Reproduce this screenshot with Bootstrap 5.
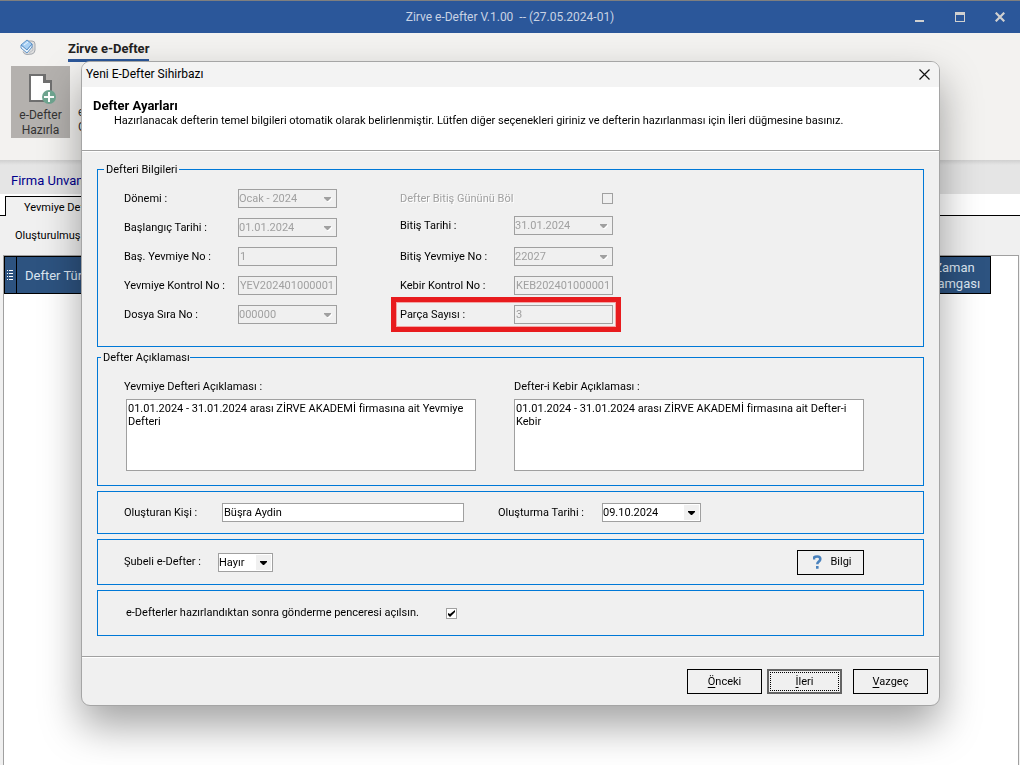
<!DOCTYPE html>
<html lang="tr">
<head>
<meta charset="utf-8">
<meta name="viewport" content="width=device-width, initial-scale=1">
<title>Zirve e-Defter</title>
<link href="https://cdn.jsdelivr.net/npm/bootstrap@5.3.0/dist/css/bootstrap.min.css" rel="stylesheet">
<style>
  body { font-family: Roboto, "Noto Sans", sans-serif; font-size: 11px; line-height: 14px; color: #000; background: #f0f0f0; overflow: hidden; }

  /* main window */
  .titlebar { height: 33px; background: #2b579a; border-top: 1px solid #7f7f7f; color: #c9d3e4; font-size: 12px; display: grid; grid-template-columns: 1fr auto 1fr; align-items: center; }
  .titlebar .win-btn { width: 40px; height: 32px; border: 0; padding: 0; background: none; color: #d0d0d0; display: grid; place-items: center; }
  .ribbon { height: 127px; background: #f3f2f0; }
  .ribbon-tabs { height: 29px; padding-left: 20px; }
  .ribbon-tab { height: 29px; line-height: 32px; font-size: 13px; font-weight: 700; color: #222; text-decoration: none; border-bottom: 3px solid #2b579a; margin-left: 32px; }
  .ribbon-tools { padding: 4px 11px 0; }
  .ribbon-btn { width: 59px; height: 72px; padding: 5px 0 0; border: 0; background: none; font-size: 12px; line-height: 15px; color: #333; }
  .ribbon-btn.current { background: #b4b1ae; }
  .ribbon-btn.cut { width: 14px; padding: 36px 0 0 8px; text-align: left; }
  .firm { height: 34px; padding: 0 11px; font-size: 13px; line-height: 42px; color: #00008b; background: linear-gradient(#d0d0d0, #e5e5e5 5px); }
  .doc-tabs { height: 22px; background: #fff; padding-top: 2px; display: flex; }
  .doc-tabs::before { content: ""; width: 5px; border-bottom: 1px solid #000; }
  .doc-tabs::after { content: ""; flex: 1; border-bottom: 1px solid #000; }
  .doc-tab { background: #f0f0f0; border: solid #000; border-width: 1px 1px 0; padding: 0 18px; color: #000; text-decoration: none; line-height: 21px; white-space: nowrap; }
  .list-head { height: 39px; padding-left: 15px; line-height: 39px; }
  .grid-area { margin: 0 1px 0 3px; background: #fff; border: 1px solid #a0a0a0; border-bottom: 0; }
  .grid-head { width: 987px; border-collapse: collapse; table-layout: fixed; color: #dce6f2; font-size: 13px; line-height: 16px; }
  .grid-head th { background: #2d5380; border: 1px solid #000; font-weight: 400; height: 37px; padding: 2px 8px 0; }
  .grid-head th.handle { width: 12px; padding: 0 2px; }
  .grid-head th.stamp { width: 72px; text-align: center; padding: 1px 0 0; }

  /* wizard */
  .wizard { margin: 61px 80px 0 81px; max-width: none; }
  .wizard .modal-content { border: 1px solid #a5a5a5; border-radius: 9px; background: #f0f0f0; box-shadow: 0 20px 40px rgba(0, 0, 0, .36); color: #000; overflow: hidden; }
  .wizard-title { height: 25px; background: #f3f3f3; padding: 0 8px 0 4px; }
  .wizard-title h1 { font-size: 12px; font-weight: 400; line-height: 27px; }
  .wizard-title button { width: 14px; height: 14px; padding: 0; border: 0; background: none; display: grid; place-items: center; }
  .wizard-intro { height: 63px; background: #fff; padding: 10px 11px; }
  .wizard-intro h2 { font-size: 13px; font-weight: 700; line-height: 17px; margin: 0; }
  .wizard-intro p { margin: 0 0 0 21px; }
  .rule { height: 2px; background: #fff; border-top: 1px solid #a0a0a0; }
  .wizard-body { padding: 10px 15px 20px; }
  .group { border: 1px solid #0078d7; padding: 0 59px 0 26px; }
  .group legend { float: none; width: auto; font-size: 11px; line-height: 14px; margin: 0; padding: 1px 2px 0; }
  .group.info { padding-bottom: 22px; }
  .group.info legend { margin-left: -20px; }
  .group.notes { margin-top: 3px; padding-bottom: 14px; }
  .group.notes legend { margin-left: -23px; padding-right: 0; }
  .note-row { padding-top: 15px; }
  .note-row label { margin-bottom: 5px; }
  .fld-col { display: flex; flex-direction: column; gap: 10px; width: 213px; }
  .fld-col.second { margin-left: 63px; }
  .fld { display: flex; align-items: center; height: 19px; position: relative; }
  .fld > label { width: 114px; white-space: nowrap; }
  .fld.raised { margin-top: -2px; margin-bottom: 2px; }
  .off { color: #a0a0a0; text-shadow: 1px 1px #fff; }
  .outlined::after { content: ""; position: absolute; inset: -8px -8px -8px -9px; border: 5px solid #e81b1e; outline: 1px solid #f3a5a5; outline-offset: -6px; pointer-events: none; }
  .ctl { display: block; width: 99px; height: 19px; padding: 0 1px; border: 1px solid #a0a0a0; border-radius: 0; background-color: #fff; color: #000; font: inherit; line-height: 15px; appearance: none; }
  select.ctl { padding: 0; background-repeat: no-repeat; background-position: right 1px center; background-image: url("data:image/svg+xml,%3Csvg xmlns='http://www.w3.org/2000/svg' width='15' height='15'%3E%3Cpath fill='%23f0f0f0' d='M0 0h15v15H0z'/%3E%3Cpath d='M4 6h7v1l-3 3h-1l-3-3z'/%3E%3C/svg%3E"); }
  .ctl:disabled { background-color: #f0f0f0; color: #a0a0a0; opacity: 1; }
  select.ctl:disabled { background-image: url("data:image/svg+xml,%3Csvg xmlns='http://www.w3.org/2000/svg' width='15' height='15'%3E%3Cpath fill='%23fff' d='M5 7h7v1l-3 3h-1l-3-3z'/%3E%3Cpath fill='%23a0a0a0' d='M4 6h7v1l-3 3h-1l-3-3z'/%3E%3C/svg%3E"); }
  textarea.ctl { width: 350px; height: 72px; padding: 2px 1px; line-height: 13px; resize: none; }
  #not1 { margin-left: 2px; }
  .tick { width: 11px; height: 11px; margin: 0; appearance: none; border: 1px solid #a0a0a0; background: #fff center no-repeat; }
  .tick:disabled { background: #f0f0f0; }
  .tick:checked { background-image: url("data:image/svg+xml,%3Csvg xmlns='http://www.w3.org/2000/svg' width='9' height='9'%3E%3Cpath d='M1 4v2l2 2 5-5V1L3 5z'/%3E%3C/svg%3E"); }
  .person { height: 43px; margin-top: 5px; }
  .person label:first-child { width: 98px; }
  #kisi { width: 242px; margin-right: 34px; }
  #kisi + label { width: 104px; }
  .branch { height: 46px; margin-top: 5px; }
  .branch label { width: 94px; }
  #sube { width: 55px; }
  .after { height: 46px; margin-top: 5px; padding-left: 28px; }
  .after label { width: 320px; }
  .push { height: 25px; width: 75px; padding: 0; border: 1px solid #000; border-radius: 0; background: #f0f0f0; color: #000; font-size: 11px; line-height: 14px; text-align: center; }
  .push.info-btn { width: 67px; padding-left: 4px; }
  .push.default { border: 2px solid #646464; padding: 1px; }
  .push.default span { display: block; border: 1px dotted #000; line-height: 17px; }
  .push u { text-underline-offset: 2px; }
  .wizard-foot { height: 47px; padding: 11px 11px 0; gap: 5px; }
  .wizard-foot .cancel { margin-left: 6px; }
</style>
</head>
<body>
<div class="vh-100 d-flex flex-column">
  <header class="titlebar">
    <span></span>
    <span>Zirve e-Defter V.1.00 &nbsp;-- (27.05.2024-01)</span>
    <div class="d-flex justify-content-end">
      <button class="win-btn" aria-label="Simge durumuna küçült"><svg width="11" height="11" fill="currentColor"><path d="M0 8h9v2H0z"/></svg></button>
      <button class="win-btn" aria-label="Ekranı kapla"><svg width="10" height="10" fill="currentColor"><path fill-rule="evenodd" d="M0 0h10v10H0zM1 3h8v6H1z"/></svg></button>
      <button class="win-btn" aria-label="Kapat"><svg width="10" height="10" stroke="currentColor" stroke-width="2.2"><path d="M.7.7l8.600 8.600M9.300.7L.7 9.300"/></svg></button>
    </div>
  </header>

  <div class="ribbon">
    <nav class="ribbon-tabs d-flex">
      <svg width="16" height="18" viewBox="0 0 16 18" class="mt-1" fill="none">
        <path d="M6 4h6q3 0 3 3v6q0 3-3 4l-5 .5q-3 0-4-3" fill="#dedede" stroke="#a2a7ad"/>
        <path d="M12 7l1 6-4 3" stroke="#b9bdc2"/>
        <path d="M1 8l6-5 5 4-5 6z" fill="#a8d0f3" stroke="#5c92c8"/>
        <path d="M1 8l6 5 5-6v3l-5 6-6-5z" fill="#eef6fd" stroke="#5c92c8"/>
        <path d="M4 8l4-3" stroke="#e8f4ff"/>
      </svg>
      <a class="ribbon-tab" href="#">Zirve e-Defter</a>
    </nav>
    <div class="ribbon-tools d-flex">
      <button class="ribbon-btn current">
        <svg width="30" height="32" viewBox="0 0 30 32" class="d-block mx-auto mb-1" fill="none">
          <path d="M4 3h15v6h6v20H4z" fill="#fff" stroke="#6f6f6f" stroke-width="2"/>
          <path d="M18 3v7h7" stroke="#6f6f6f" stroke-width="2"/>
          <circle cx="23" cy="25" r="7" fill="#6fa590"/>
          <path d="M23 20v10M18 25h10" stroke="#fff" stroke-width="2"/>
        </svg>
        e-Defter<br>Hazırla
      </button>
      <button class="ribbon-btn cut">e<br>G</button>
    </div>
  </div>

  <div class="firm">Firma Unvanı</div>
  <nav class="doc-tabs"><a class="doc-tab" href="#">Yevmiye Defteri</a></nav>
  <div class="list-head">Oluşturulmuş Defterler</div>
  <div class="grid-area flex-grow-1">
    <table class="grid-head">
      <thead><tr>
        <th class="handle"><svg width="7" height="10" class="d-block" stroke="#fff"><path d="M0 .5h1M2 .5h4M0 3.500h1M2 3.500h4M0 6.500h1M2 6.500h4M0 9.500h1M2 9.500h4"/></svg></th>
        <th>Defter Türü</th>
        <th class="stamp">Zaman<br>Damgası</th>
      </tr></thead>
    </table>
  </div>
</div>

<div class="modal d-block overflow-hidden" tabindex="-1" role="dialog" aria-labelledby="wizTitle">
  <div class="modal-dialog wizard">
    <form class="modal-content">
      <div class="wizard-title d-flex align-items-center justify-content-between">
        <h1 id="wizTitle" class="m-0">Yeni E-Defter Sihirbazı</h1>
        <button type="button" aria-label="Kapat"><svg width="11" height="11" stroke="#111" stroke-width="1.200"><path d="M.5.5l10 10M10.500.5l-10 10"/></svg></button>
      </div>
      <div class="wizard-intro">
        <h2>Defter Ayarları</h2>
        <p>Hazırlanacak defterin temel bilgileri otomatik olarak belirlenmiştir. Lütfen diğer seçenekleri giriniz ve defterin hazırlanması için İleri düğmesine basınız.</p>
      </div>
      <div class="rule"></div>

      <div class="wizard-body">
        <fieldset class="group info">
          <legend>Defteri Bilgileri</legend>
          <div class="d-flex pt-2 mt-1">
            <div class="fld-col">
              <div class="fld"><label for="donem">Dönemi :</label><select id="donem" class="ctl" disabled><option>Ocak - 2024</option></select></div>
              <div class="fld"><label for="bas">Başlangıç Tarihi :</label><select id="bas" class="ctl" disabled><option>01.01.2024</option></select></div>
              <div class="fld"><label for="basNo">Baş. Yevmiye No :</label><input id="basNo" class="ctl" value="1" disabled></div>
              <div class="fld"><label for="yev">Yevmiye Kontrol No :</label><input id="yev" class="ctl" value="YEV202401000001" disabled></div>
              <div class="fld"><label for="sira">Dosya Sıra No :</label><select id="sira" class="ctl" disabled><option>000000</option></select></div>
            </div>
            <div class="fld-col second">
              <div class="fld justify-content-between"><label for="bol" class="off">Defter Bitiş Gününü Böl</label><input id="bol" type="checkbox" class="tick" disabled></div>
              <div class="fld raised"><label for="bit">Bitiş Tarihi :</label><select id="bit" class="ctl" disabled><option>31.01.2024</option></select></div>
              <div class="fld"><label for="bitNo">Bitiş Yevmiye No :</label><select id="bitNo" class="ctl" disabled><option>22027</option></select></div>
              <div class="fld"><label for="keb">Kebir Kontrol No :</label><input id="keb" class="ctl" value="KEB202401000001" disabled></div>
              <div class="fld outlined"><label for="parca">Parça Sayısı :</label><input id="parca" class="ctl" value="3" disabled></div>
            </div>
          </div>
        </fieldset>

        <fieldset class="group notes">
          <legend>Defter Açıklaması</legend>
          <div class="note-row d-flex justify-content-between">
            <div><label for="not1" class="d-block">Yevmiye Defteri Açıklaması :</label>
              <textarea id="not1" class="ctl">01.01.2024 - 31.01.2024 arası ZİRVE AKADEMİ firmasına ait Yevmiye Defteri</textarea></div>
            <div><label for="not2" class="d-block">Defter-i Kebir Açıklaması :</label>
              <textarea id="not2" class="ctl">01.01.2024 - 31.01.2024 arası ZİRVE AKADEMİ firmasına ait Defter-i Kebir</textarea></div>
          </div>
        </fieldset>

        <div class="group person d-flex align-items-center">
          <label for="kisi">Oluşturan Kişi :</label><input id="kisi" class="ctl" value="Büşra Aydin">
          <label for="tarih">Oluşturma Tarihi :</label><select id="tarih" class="ctl"><option>09.10.2024</option></select>
        </div>

        <div class="group branch d-flex align-items-center">
          <label for="sube">Şubeli e-Defter :</label><select id="sube" class="ctl"><option>Hayır</option></select>
          <button type="button" class="push info-btn ms-auto d-flex align-items-center justify-content-center gap-2"><svg width="9" height="14" fill="none" stroke="#4a82bd" stroke-width="2.600"><path d="M1 4.500V2.500q1-1 3.300-1 3 0 3 2.600 0 1.500-1.500 2.500Q4.300 7.800 4.300 9.300M4.300 11v2.700"/></svg>Bilgi</button>
        </div>

        <div class="group after d-flex align-items-center">
          <label for="ac">e-Defterler hazırlandıktan sonra gönderme penceresi açılsın.</label><input id="ac" type="checkbox" class="tick" checked>
        </div>
      </div>

      <div class="rule"></div>
      <div class="wizard-foot d-flex justify-content-end">
        <button type="button" class="push"><u>Ö</u>nceki</button>
        <button type="button" class="push default"><span><u>İ</u>leri</span></button>
        <button type="button" class="push cancel"><u>V</u>azgeç</button>
      </div>
    </form>
  </div>
</div>

<script src="https://cdn.jsdelivr.net/npm/bootstrap@5.3.0/dist/js/bootstrap.bundle.min.js"></script>
</body>
</html>
